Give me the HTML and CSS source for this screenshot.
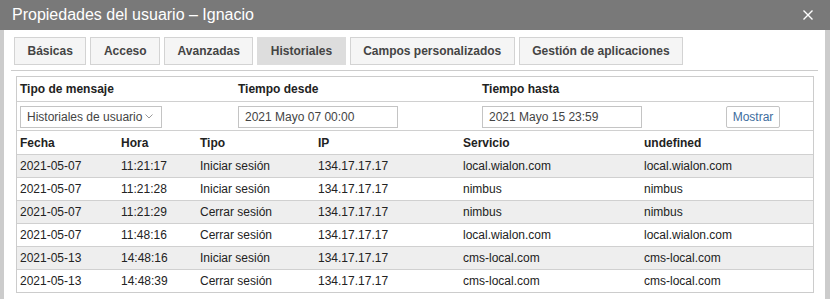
FILE: index.html
```html
<!DOCTYPE html>
<html lang="es">
<head>
    <meta charset="UTF-8">
    <title>Propiedades del usuario</title>
    <link rel="stylesheet" href="styles.css">
</head>
<body>

<div class="dialog">
    <div class="dialog-header">
        <div class="dialog-title">Propiedades del usuario – Ignacio</div>
        <svg class="close" width="10" height="10" viewBox="0 0 10 10">
            <path d="M0.5 0.5 L9.5 9.5 M9.5 0.5 L0.5 9.5" stroke="#fff" stroke-width="1.4" fill="none"/>
        </svg>
    </div>

    <div class="dialog-body">
        <div class="tabs">
            <div class="tab">Básicas</div>
            <div class="tab">Acceso</div>
            <div class="tab">Avanzadas</div>
            <div class="tab active">Historiales</div>
            <div class="tab">Campos personalizados</div>
            <div class="tab">Gestión de aplicaciones</div>
        </div>

        <div class="panel">
            <!-- Filters -->
            <div class="filter-row labels">
                <div class="cell">Tipo de mensaje</div>
                <div class="cell">Tiempo desde</div>
                <div class="cell">Tiempo hasta</div>
                <div class="cell"></div>
            </div>
            <div class="filter-row controls">
                <div class="cell">
                    <div class="select">
                        <span>Historiales de usuario</span>
                        <svg width="8" height="5" viewBox="0 0 8 5">
                            <path d="M0.5 0.5 L4 4 L7.5 0.5" stroke="#999" stroke-width="1" fill="none"/>
                        </svg>
                    </div>
                </div>
                <div class="cell"><div class="input">2021 Mayo 07 00:00</div></div>
                <div class="cell"><div class="input">2021 Mayo 15 23:59</div></div>
                <div class="cell"><button class="btn">Mostrar</button></div>
            </div>

            <!-- Log table -->
            <div class="log-row head">
                <div class="cell">Fecha</div>
                <div class="cell">Hora</div>
                <div class="cell">Tipo</div>
                <div class="cell">IP</div>
                <div class="cell">Servicio</div>
                <div class="cell">undefined</div>
            </div>
            <div class="log-row odd">
                <div class="cell">2021-05-07</div>
                <div class="cell">11:21:17</div>
                <div class="cell">Iniciar sesión</div>
                <div class="cell">134.17.17.17</div>
                <div class="cell">local.wialon.com</div>
                <div class="cell">local.wialon.com</div>
            </div>
            <div class="log-row">
                <div class="cell">2021-05-07</div>
                <div class="cell">11:21:28</div>
                <div class="cell">Iniciar sesión</div>
                <div class="cell">134.17.17.17</div>
                <div class="cell">nimbus</div>
                <div class="cell">nimbus</div>
            </div>
            <div class="log-row odd">
                <div class="cell">2021-05-07</div>
                <div class="cell">11:21:29</div>
                <div class="cell">Cerrar sesión</div>
                <div class="cell">134.17.17.17</div>
                <div class="cell">nimbus</div>
                <div class="cell">nimbus</div>
            </div>
            <div class="log-row">
                <div class="cell">2021-05-07</div>
                <div class="cell">11:48:16</div>
                <div class="cell">Cerrar sesión</div>
                <div class="cell">134.17.17.17</div>
                <div class="cell">local.wialon.com</div>
                <div class="cell">local.wialon.com</div>
            </div>
            <div class="log-row odd">
                <div class="cell">2021-05-13</div>
                <div class="cell">14:48:16</div>
                <div class="cell">Iniciar sesión</div>
                <div class="cell">134.17.17.17</div>
                <div class="cell">cms-local.com</div>
                <div class="cell">cms-local.com</div>
            </div>
            <div class="log-row">
                <div class="cell">2021-05-13</div>
                <div class="cell">14:48:39</div>
                <div class="cell">Cerrar sesión</div>
                <div class="cell">134.17.17.17</div>
                <div class="cell">cms-local.com</div>
                <div class="cell">cms-local.com</div>
            </div>
        </div>
    </div>
</div>

</body>
</html>
```

FILE: styles.css
```css
:root {
    --header: #797979;
    --frame: #cccccc;
    --line: #d0d0d0;
    --row-alt: #eeeeee;
    --text: #222222;
}

body {
    margin: 0;
    background-color: var(--frame);
    font-family: "Liberation Sans", Arial, sans-serif;
    font-size: 12px;
    color: var(--text);
    height: 299px;
    overflow: hidden;
}

.dialog {
    display: flex;
    flex-direction: column;
    height: 100%;
}

.dialog-header {
    height: 30px;
    background-color: var(--header);
    display: flex;
    align-items: center;
    justify-content: space-between;
    padding: 0 17px 0 12px;
    flex-shrink: 0;
}

.dialog-title {
    color: #fff;
    font-size: 16px;
}

.dialog-body {
    flex: 1;
    background-color: #fff;
    margin: 0 5px 0 4px;
}

/* Tabs */
.tabs {
    display: flex;
    gap: 4px;
    margin: 7px 7px 0;
    padding: 0 3px 5px;
    border-bottom: 1px solid var(--frame);
}

.tab {
    height: 26px;
    line-height: 26px;
    padding: 0 12.5px;
    background-color: #f5f5f5;
    border: 1px solid #d3d3d3;
    color: #444;
    font-weight: bold;
}

.tab.active {
    background-color: #dddddd;
    border-color: #dddddd;
}

/* Panel */
.panel {
    margin: 5px 11px 0 12px;
    border: 1px solid var(--frame);
}

.cell {
    padding: 0 3px;
    white-space: nowrap;
}

.filter-row {
    display: grid;
    grid-template-columns: 218px 244px 244px 1fr;
    align-items: center;
}

.filter-row.labels {
    height: 24px;
    font-weight: bold;
}

.filter-row.controls {
    height: 28px;
    border-top: 1px solid var(--line);
}

.select,
.input {
    box-sizing: border-box;
    height: 22px;
    border: 1px solid #c4c4c4;
    color: #444;
    display: flex;
    align-items: center;
    padding-left: 6px;
}

.select {
    width: 142px;
    margin-top: 1px;
    justify-content: space-between;
    padding-right: 8px;
}

.input {
    width: 160px;
    margin-top: 1px;
}

.btn {
    box-sizing: border-box;
    height: 22px;
    width: 54px;
    margin-top: 1px;
    padding: 0;
    background-color: #fff;
    border: 1px solid #c4c4c4;
    border-radius: 2px;
    font-family: inherit;
    font-size: 12px;
    color: #3d6d9e;
}

.log-row {
    display: grid;
    grid-template-columns: 101px 79px 118px 145px 181px 1fr;
    align-items: center;
    height: 22px;
    border-top: 1px solid var(--line);
}

.log-row.head {
    height: 23px;
    font-weight: bold;
}

.log-row.odd {
    background-color: var(--row-alt);
}
```
